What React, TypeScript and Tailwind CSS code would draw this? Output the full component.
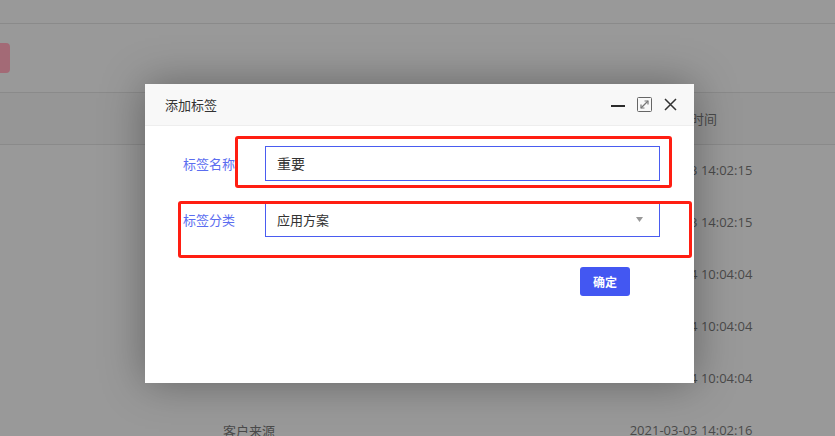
import React from 'react';

/**
 * Add-tag dialog over a dimmed table page.
 * The page behind is drawn already dimmed (grey tones) instead of stacking an overlay.
 */

const times = [
  '2021-03-03 14:02:15',
  '2021-03-03 14:02:15',
  '2021-03-04 10:04:04',
  '2021-03-04 10:04:04',
  '2021-03-04 10:04:04',
  '2021-03-03 14:02:16',
];

const latin = "font-['Open_Sans','Noto_Sans_CJK_SC',sans-serif]";
const cjk = "font-['Noto_Sans_CJK_SC',sans-serif]";

function BackgroundPage() {
  return (
    <div className="flex flex-col w-full h-full bg-[#999999] text-[#4a4a4a]">
      {/* top bar */}
      <div className="h-[24px] shrink-0 border-b border-[#8a8a8a]" />
      {/* toolbar with cut-off pink button */}
      <div className="h-[69px] shrink-0 border-b border-[#8a8a8a] flex items-center">
        <div className="w-[10px] h-[30px] bg-[#a36a76] rounded-r-[4px]" />
      </div>
      {/* table header */}
      <div className={`h-[52px] shrink-0 border-b border-[#8a8a8a] bg-[#969696] flex items-center text-[13px] ${cjk}`}>
        <div className="w-[498px] shrink-0" />
        <div className="w-[386px] shrink-0 text-center">创建时间</div>
      </div>
      {times.map((t, i) => (
        <div key={i} className="h-[52px] flex items-center text-[13px] shrink-0">
          <div className={`w-[498px] shrink-0 text-center ${cjk}`}>{i === 5 ? '客户来源' : ''}</div>
          <div className={`w-[386px] shrink-0 text-center ${latin}`}>{t}</div>
        </div>
      ))}
    </div>
  );
}

function AddTagDialog() {
  return (
    <div className={`absolute left-[145px] top-[84px] w-[549px] h-[299px] bg-white shadow-[0_0_40px_rgba(0,0,0,0.35)] ${cjk}`}>
      {/* header */}
      <div className="h-[42px] bg-[#f8f8f8] border-b border-[#eeeeee] flex items-center pl-[20px] pr-[17px]">
        <span className="text-[13px] text-[#333]">添加标签</span>
        <div className="ml-auto flex items-center gap-[12px]">
          <svg width="14" height="14" viewBox="0 0 14 14">
            <rect x="0" y="7" width="14" height="2" fill="#2b2b2b" />
          </svg>
          <svg width="15" height="15" viewBox="0 0 15 15">
            <rect x="0.5" y="0.5" width="14" height="14" rx="1" fill="none" stroke="#666" />
            <path d="M4 11 L11 4" stroke="#777" strokeWidth="1.2" />
            <path d="M7.5 4 H11 V7.5" fill="none" stroke="#777" strokeWidth="1.2" />
            <path d="M4 7.5 V11 H7.5" fill="none" stroke="#777" strokeWidth="1.2" />
          </svg>
          <svg width="13" height="13" viewBox="0 0 13 13">
            <path d="M1 1 L12 12 M12 1 L1 12" stroke="#333" strokeWidth="1.5" />
          </svg>
        </div>
      </div>

      {/* form */}
      <div className="flex flex-col gap-[21px] pt-[20px] pl-[38px]">
        <div className="flex items-center">
          <label className="w-[82px] text-[13px] text-[#5b6df0]">标签名称</label>
          <div className="w-[395px] h-[35px] border border-[#4a5cf0] flex items-center px-[11px] text-[14px] text-[#333]">
            重要
          </div>
        </div>
        <div className="flex items-center">
          <label className="w-[82px] text-[13px] text-[#5b6df0]">标签分类</label>
          <div className="w-[395px] h-[35px] border border-[#4a5cf0] flex items-center px-[11px] text-[13px] text-[#333]">
            应用方案
            <svg className="ml-auto mr-[5px]" width="7" height="5" viewBox="0 0 7 5">
              <path d="M0 0 H7 L3.5 5 Z" fill="#999" />
            </svg>
          </div>
        </div>
      </div>

      <div className="flex justify-end pr-[64px] pt-[30px]">
        <button className="w-[50px] h-[29px] rounded-[3px] bg-[#4357f2] text-white text-[12px] font-bold">
          确定
        </button>
      </div>

      {/* red annotation boxes */}
      <div className="absolute left-[90px] top-[52px] w-[437px] h-[52px] border-[3px] border-[#ff1e12] rounded-[3px]" />
      <div className="absolute left-[33px] top-[117px] w-[514px] h-[57px] border-[3px] border-[#ff1e12] rounded-[3px]" />
    </div>
  );
}

export default function App() {
  return (
    <div className="relative w-[835px] h-[436px] overflow-hidden">
      <BackgroundPage />
      <AddTagDialog />
    </div>
  );
}
